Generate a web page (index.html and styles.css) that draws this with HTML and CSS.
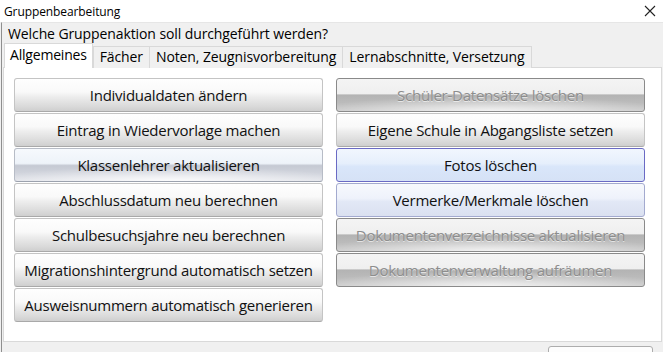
FILE: index.html
```html
<!DOCTYPE html>
<html lang="de">
<head>
    <meta charset="UTF-8">
    <title>Gruppenbearbeitung</title>
    <link rel="stylesheet" href="styles.css">
</head>
<body>
    <div class="window">
        <div class="titlebar">
            <span class="title">Gruppenbearbeitung</span>
            <svg class="close" width="12" height="12" viewBox="0 0 12 12">
                <path d="M1 1 L11 11 M11 1 L1 11" stroke="#222" stroke-width="1.1" fill="none"/>
            </svg>
        </div>

        <div class="main">
            <div class="question">Welche Gruppenaktion soll durchgeführt werden?</div>

            <div class="tabs">
                <div class="tab active">Allgemeines</div>
                <div class="tab">Fächer</div>
                <div class="tab">Noten, Zeugnisvorbereitung</div>
                <div class="tab">Lernabschnitte, Versetzung</div>
            </div>

            <div class="panel">
                <div class="column">
                    <div class="btn">Individualdaten ändern</div>
                    <div class="btn">Eintrag in Wiedervorlage machen</div>
                    <div class="btn pressed">Klassenlehrer aktualisieren</div>
                    <div class="btn">Abschlussdatum neu berechnen</div>
                    <div class="btn">Schulbesuchsjahre neu berechnen</div>
                    <div class="btn">Migrationshintergrund automatisch setzen</div>
                    <div class="btn">Ausweisnummern automatisch generieren</div>
                </div>
                <div class="column">
                    <div class="btn disabled">Schüler-Datensätze löschen</div>
                    <div class="btn">Eigene Schule in Abgangsliste setzen</div>
                    <div class="btn hot">Fotos löschen</div>
                    <div class="btn hot light">Vermerke/Merkmale löschen</div>
                    <div class="btn disabled">Dokumentenverzeichnisse aktualisieren</div>
                    <div class="btn disabled">Dokumentenverwaltung aufräumen</div>
                </div>
            </div>

            <div class="footer">
                <div class="footer-btn"></div>
            </div>
        </div>
    </div>
</body>
</html>
```

FILE: styles.css
```css
/* Basic reset */
* {
    margin: 0;
    padding: 0;
    box-sizing: border-box;
}

body {
    font-family: "Open Sans", "Noto Sans", sans-serif;
    background-color: #f0f0f0;
    color: #000;
    width: 663px;
    height: 352px;
    overflow: hidden;
}

.window {
    width: 663px;
    height: 352px;
    display: flex;
    flex-direction: column;
    overflow: hidden;
}

/* Title bar */
.titlebar {
    flex-shrink: 0;
    height: 22px;
    background-color: #fff;
    display: flex;
    align-items: center;
    justify-content: space-between;
    padding: 0 7px 0 4px;
}

.title {
    font-size: 12px;
    letter-spacing: -0.1px;
}

.close {
    display: block;
}

/* Main area */
.main {
    flex: 1;
    min-height: 0;
    display: flex;
    flex-direction: column;
    border-left: 1px solid #8f8f8f;
    margin-left: 1px;
    border-top: 1px solid #e6e6e6;
}

.question {
    flex-shrink: 0;
    height: 21px;
    font-size: 14px;
    line-height: 22px;
    padding-left: 6px;
    letter-spacing: -0.1px;
}

/* Tabs */
.tabs {
    flex-shrink: 0;
    display: flex;
    align-items: flex-end;
    height: 24px;
    padding-left: 2px;
    position: relative;
    z-index: 1;
    margin-bottom: -1px;
}

.tab {
    height: 22px;
    padding: 0 6px;
    font-size: 14px;
    line-height: 20px;
    letter-spacing: -0.1px;
    background-color: #f0f0f0;
    border: 1px solid #d9d9d9;
    border-bottom: none;
    margin-left: -1px;
}

.tab.active {
    height: 25px;
    padding: 0 5px;
    margin-left: 0;
    margin-right: 1px;
    background-color: #fff;
    line-height: 22px;
    letter-spacing: -0.2px;
}

/* Content panel */
.panel {
    flex-shrink: 0;
    height: 275px;
    margin-left: 1px;
    margin-right: 1px;
    background-color: #fff;
    border: 1px solid #d9d9d9;
    padding: 10px;
    display: flex;
    gap: 13px;
}

.column {
    width: 309px;
    display: flex;
    flex-direction: column;
    gap: 1px;
}

/* Buttons */
.btn {
    flex-shrink: 0;
    height: 34px;
    display: flex;
    align-items: center;
    justify-content: center;
    font-size: 15px;
    letter-spacing: -0.25px;
    color: #111;
    border: 1px solid #c4c4c4;
    border-bottom-color: #a9a9a9;
    border-radius: 3px;
    background: linear-gradient(to bottom, #fefefe 0%, #f9f9f9 40%, #ededed 55%, #dadada 85%, #cfcfcf 100%);
}

.btn.pressed {
    border-color: #b7bcc6;
    border-bottom-color: #9ca2ae;
    background:
        radial-gradient(ellipse 60% 45% at 50% 100%, rgba(255, 255, 255, 0.85), rgba(255, 255, 255, 0)),
        linear-gradient(to bottom, #f6f9fd 0%, #eef3f9 45%, #c5c9d3 52%, #d3d6de 80%, #e2e4ea 100%);
}

.btn.disabled {
    color: #8d8d8d;
    text-shadow: 0 1px 0 rgba(255, 255, 255, 0.6);
    border-color: #8a8a8a;
    background:
        radial-gradient(ellipse 60% 45% at 50% 100%, rgba(255, 255, 255, 0.75), rgba(255, 255, 255, 0)),
        linear-gradient(to bottom, #f4f4f4 0%, #efefef 46%, #b3b3b3 50%, #bdbdbd 80%, #cacaca 100%);
}

.btn.hot {
    border-color: #6a6ac4;
    background: linear-gradient(to bottom, #f1f6fe 0%, #e6effc 45%, #d9e6fa 55%, #d6e2f6 100%);
}

.btn.hot.light {
    border-color: #a3aacf;
    background: linear-gradient(to bottom, #f7f9fd 0%, #eef2fb 45%, #e2e8f6 55%, #dbe1f0 100%);
}

/* Footer */
.footer {
    flex: 1;
    min-height: 0;
    display: flex;
    justify-content: flex-end;
    align-items: flex-start;
    padding: 4px 10px 0 0;
}

.footer-btn {
    flex-shrink: 0;
    width: 105px;
    height: 20px;
    background-color: #fdfdfd;
    border: 1px solid #adadad;
    border-radius: 3px;
}
```
